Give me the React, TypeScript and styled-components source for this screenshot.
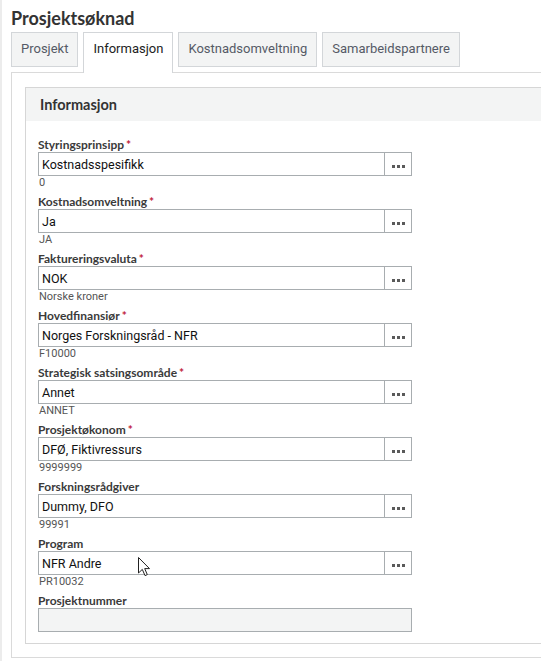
import React from "react";
import styled, { createGlobalStyle } from "styled-components";

const GlobalStyle = createGlobalStyle`
  html, body {
    margin: 0;
    padding: 0;
    background: #ffffff;
    overflow: hidden;
  }
  body {
    font-family: Roboto, "Liberation Sans", Arial, sans-serif;
    color: #333;
  }
`;

type Field = {
  label: string;
  value: string;
  code?: string;
  required?: boolean;
  lookup?: boolean;
  disabled?: boolean;
};

const fields: Field[] = [
  { label: "Styringsprinsipp", value: "Kostnadsspesifikk", code: "0", required: true, lookup: true },
  { label: "Kostnadsomveltning", value: "Ja", code: "JA", required: true, lookup: true },
  { label: "Faktureringsvaluta", value: "NOK", code: "Norske kroner", required: true, lookup: true },
  { label: "Hovedfinansiør", value: "Norges Forskningsråd - NFR", code: "F10000", required: true, lookup: true },
  { label: "Strategisk satsingsområde", value: "Annet", code: "ANNET", required: true, lookup: true },
  { label: "Prosjektøkonom", value: "DFØ, Fiktivressurs", code: "9999999", required: true, lookup: true },
  { label: "Forskningsrådgiver", value: "Dummy, DFO", code: "99991", lookup: true },
  { label: "Program", value: "NFR Andre", code: "PR10032", lookup: true },
  { label: "Prosjektnummer", value: "", disabled: true },
];

const tabs = ["Prosjekt", "Informasjon", "Kostnadsomveltning", "Samarbeidspartnere"];

const Page = styled.div`
  position: relative;
  min-height: 661px;
  box-sizing: border-box;
  border-left: 2px solid #ececec;
  padding: 7px 0 0 9px;
`;

const Title = styled.h1`
  margin: 0;
  font-family: Lato, "Liberation Sans", sans-serif;
  font-size: 18px;
  font-weight: 700;
  line-height: 22px;
  color: #333;
  margin-bottom: 3px;
`;

const TabRow = styled.div`
  display: flex;
  align-items: flex-start;
  gap: 5px;
  height: 40px;
`;

const Tab = styled.div<{ $active?: boolean }>`
  position: relative;
  z-index: 1;
  box-sizing: border-box;
  height: ${(p) => (p.$active ? "41px" : "35px")};
  padding: 8px 9px 0 9px;
  font-size: 13px;
  line-height: 16px;
  color: ${(p) => (p.$active ? "#222" : "#555a66")};
  background: ${(p) => (p.$active ? "#ffffff" : "#f3f4f4")};
  border: 1px solid #d3d6d9;
  border-bottom: ${(p) => (p.$active ? "none" : "1px solid #d3d6d9")};
`;

const Panel = styled.div`
  box-sizing: border-box;
  border: 1px solid #dadada;
  border-right: none;
  padding: 14px 0 13px 13px;
`;

const Section = styled.section`
  border: 1px solid #d6d6d6;
  border-right: none;
`;

const SectionHeader = styled.div`
  background: #f3f4f4;
  height: 33px;
  padding-left: 14px;
  display: flex;
  align-items: center;
  font-family: Lato, "Liberation Sans", sans-serif;
  font-weight: 700;
  font-size: 14.5px;
  color: #333;
`;

const SectionBody = styled.div`
  padding: 17px 12px 11px 12px;
  display: flex;
  flex-direction: column;
  gap: 5px;
`;

const FieldBlock = styled.div`
  display: flex;
  flex-direction: column;
  width: 374px;
`;

const Label = styled.label`
  font-family: Lato, "Liberation Sans", sans-serif;
  font-weight: 700;
  font-size: 12px;
  line-height: 14px;
  color: #3a3a3a;
`;

const Required = styled.span`
  color: #c0213a;
  margin-left: 2px;
`;

const InputRow = styled.div`
  display: flex;
  height: 24px;
`;

const Input = styled.div<{ $disabled?: boolean }>`
  flex: 1;
  box-sizing: border-box;
  border: 1px solid #a8adb0;
  background: ${(p) => (p.$disabled ? "#f3f4f4" : "#ffffff")};
  padding-left: 3px;
  display: flex;
  align-items: center;
  font-size: 12.5px;
  color: #111;
`;

const LookupButton = styled.div`
  width: 27px;
  box-sizing: border-box;
  border: 1px solid #a8adb0;
  border-left: none;
  display: flex;
  align-items: flex-end;
  justify-content: center;
  gap: 2px;
  padding-bottom: 7px;
  background: #ffffff;
`;

const Dot = styled.span`
  width: 3px;
  height: 3px;
  background: #5a5a5a;
`;

const Hint = styled.div`
  font-size: 11px;
  line-height: 14px;
  color: #555;
  padding-left: 1px;
`;

const Pointer = styled.svg`
  position: absolute;
  left: 136px;
  top: 557px;
`;

export default function App() {
  return (
    <>
      <GlobalStyle />
      <Page>
        <Title>Prosjektsøknad</Title>
        <TabRow>
          {tabs.map((t) => (
            <Tab key={t} $active={t === "Informasjon"}>
              {t}
            </Tab>
          ))}
        </TabRow>
        <Panel>
          <Section>
            <SectionHeader>Informasjon</SectionHeader>
            <SectionBody>
              {fields.map((f) => (
                <FieldBlock key={f.label}>
                  <Label>
                    {f.label}
                    {f.required && <Required>*</Required>}
                  </Label>
                  <InputRow>
                    <Input $disabled={f.disabled}>{f.value}</Input>
                    {f.lookup && (
                      <LookupButton>
                        <Dot />
                        <Dot />
                        <Dot />
                      </LookupButton>
                    )}
                  </InputRow>
                  {f.code && <Hint>{f.code}</Hint>}
                </FieldBlock>
              ))}
            </SectionBody>
          </Section>
        </Panel>
        <Pointer width="13" height="20" viewBox="0 0 13 20">
          <path
            d="M0.5 0.5 L0.5 16 L4.3 12.4 L7 18.6 L9.3 17.6 L6.7 11.6 L11.5 11.6 Z"
            fill="#ffffff"
            stroke="#222"
            strokeWidth="1"
            strokeLinejoin="round"
          />
        </Pointer>
      </Page>
    </>
  );
}
